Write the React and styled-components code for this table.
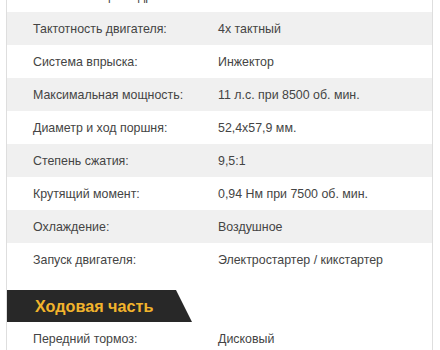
import React from "react";
import styled, { createGlobalStyle } from "styled-components";

const engine = [
  ["Количество цилиндров:", "1"],
  ["Тактотность двигателя:", "4х тактный"],
  ["Система впрыска:", "Инжектор"],
  ["Максимальная мощность:", "11 л.с. при 8500 об. мин."],
  ["Диаметр и ход поршня:", "52,4х57,9 мм."],
  ["Степень сжатия:", "9,5:1"],
  ["Крутящий момент:", "0,94 Нм при 7500 об. мин."],
  ["Охлаждение:", "Воздушное"],
  ["Запуск двигателя:", "Электростартер / кикстартер"],
];

const chassis = [
  ["Передний тормоз:", "Дисковый"],
  ["Задний тормоз:", "Барабанный"],
];

const GlobalStyle = createGlobalStyle`
  html, body {
    margin: 0;
    padding: 0;
    background: #fff;
    overflow: hidden;
  }
  body {
    font-family: "Liberation Sans", Arial, sans-serif;
  }
`;

const Card = styled.div`
  width: 427px;
  margin: -21px 0 0 6px;
  border-left: 1px solid #dedede;
  border-right: 1px solid #dedede;
  box-sizing: border-box;
  background: #fff;
`;

const Table = styled.div`
  display: flex;
  flex-direction: column;
`;

const Row = styled.div`
  display: grid;
  grid-template-columns: 185px 1fr;
  align-items: center;
  height: 33px;
  padding-left: 26px;
  font-size: 12.4px;
  color: #444;
  &:nth-child(even) {
    background: #f0f0f0;
  }
`;

const SectionTitle = styled.div`
  width: 185px;
  height: 32px;
  margin-top: 14px;
  display: flex;
  align-items: center;
  padding-left: 28px;
  box-sizing: border-box;
  background: #282828;
  clip-path: polygon(0 0, calc(100% - 16px) 0, 100% 100%, 0 100%);
  color: #f2b42c;
  font-size: 16.2px;
  font-weight: bold;
`;

function SpecTable({ rows }) {
  return (
    <Table>
      {rows.map(([label, value]) => (
        <Row key={label}>
          <span>{label}</span>
          <span>{value}</span>
        </Row>
      ))}
    </Table>
  );
}

export default function App() {
  return (
    <>
      <GlobalStyle />
      <Card>
        <SpecTable rows={engine} />
        <SectionTitle>Ходовая часть</SectionTitle>
        <SpecTable rows={chassis} />
      </Card>
    </>
  );
}
